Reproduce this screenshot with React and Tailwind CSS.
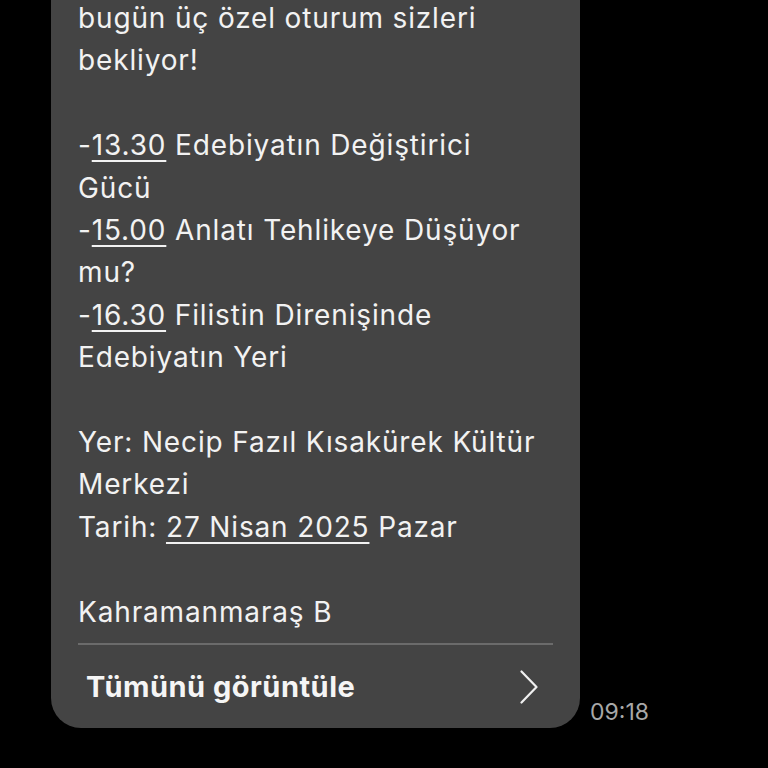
export default function App() {
  const font = { fontFamily: 'Inter, Roboto, "Noto Sans", sans-serif' };
  const u = "underline decoration-[1.5px] underline-offset-[5px]";
  return (
    <div className="w-[768px] h-[768px] bg-black overflow-hidden" style={font}>
      <div className="flex items-end -mt-[3px] pl-[51px]">
        <div className="w-[529px] bg-[#444444] rounded-b-[30px] flex flex-col">
          <div className="pl-[27px] pr-[10px] text-[28px] leading-[42.4px] tracking-[0.85px] text-[#f2f2f2]">
            <div>bugün üç özel oturum sizleri</div>
            <div>bekliyor!</div>
            <div>&nbsp;</div>
            <div>-<span className={u}>13.30</span> Edebiyatın Değiştirici</div>
            <div>Gücü</div>
            <div>-<span className={u}>15.00</span> Anlatı Tehlikeye Düşüyor</div>
            <div>mu?</div>
            <div>-<span className={u}>16.30</span> Filistin Direnişinde</div>
            <div>Edebiyatın Yeri</div>
            <div>&nbsp;</div>
            <div className="whitespace-nowrap">Yer: Necip Fazıl Kısakürek Kültür</div>
            <div>Merkezi</div>
            <div>Tarih: <span className={u}>27 Nisan 2025</span> Pazar</div>
            <div>&nbsp;</div>
            <div>Kahramanmaraş B</div>
          </div>
          <div className="mx-[27px] mt-[10px] h-[2px] bg-[#6b6b6b]" />
          <div className="flex items-center justify-between pl-[35px] pr-[42px] h-[83px]">
            <span className="text-[29px] font-bold tracking-[0.5px] text-[#f5f5f5]">Tümünü görüntüle</span>
            <svg width="18" height="34" viewBox="0 0 18 34" fill="none" stroke="#f0f0f0" strokeWidth="2.2" strokeLinecap="round" strokeLinejoin="round">
              <path d="M1.5 1.5 L16.5 17 L1.5 32.5" />
            </svg>
          </div>
        </div>
        <div className="ml-[10px] -mb-[1px] text-[23px] text-[#a8a8a8]">09:18</div>
      </div>
    </div>
  );
}
